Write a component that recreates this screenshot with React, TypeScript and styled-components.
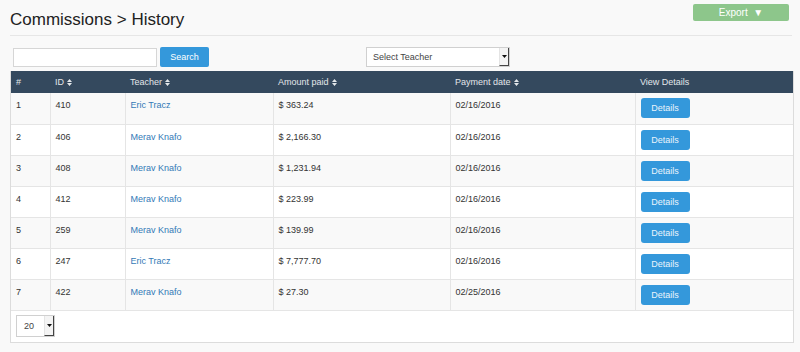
import React from 'react';
import styled, { createGlobalStyle } from 'styled-components';

const rows = [
    { n: 1, id: 410, teacher: 'Eric Tracz', amount: '$ 363.24', date: '02/16/2016' },
    { n: 2, id: 406, teacher: 'Merav Knafo', amount: '$ 2,166.30', date: '02/16/2016' },
    { n: 3, id: 408, teacher: 'Merav Knafo', amount: '$ 1,231.94', date: '02/16/2016' },
    { n: 4, id: 412, teacher: 'Merav Knafo', amount: '$ 223.99', date: '02/16/2016' },
    { n: 5, id: 259, teacher: 'Merav Knafo', amount: '$ 139.99', date: '02/16/2016' },
    { n: 6, id: 247, teacher: 'Eric Tracz', amount: '$ 7,777.70', date: '02/16/2016' },
    { n: 7, id: 422, teacher: 'Merav Knafo', amount: '$ 27.30', date: '02/25/2016' },
];

const columns = [
    { label: '#', width: 39, sort: false },
    { label: 'ID', width: 75, sort: true },
    { label: 'Teacher', width: 148, sort: true },
    { label: 'Amount paid', width: 177, sort: true },
    { label: 'Payment date', width: 185, sort: true },
    { label: 'View Details', width: 158, sort: false },
];

function SortIcon() {
    return (
        <SortSvg width="5" height="7" viewBox="0 0 5 7">
            <path d="M0 3L2.5 0L5 3Z M0 4L2.5 7L5 4Z" fill="currentColor" />
        </SortSvg>
    );
}

function FakeSelect({ value, width, small }: { value: string; width: number; small?: boolean }) {
    return (
        <SelectBox $width={width} $small={small}>
            <SelectText $small={small}>{value}</SelectText>
            <SelectArrow>
                <svg width="5" height="3" viewBox="0 0 5 3">
                    <path d="M0 0H5L2.5 3Z" fill="#111" />
                </svg>
            </SelectArrow>
        </SelectBox>
    );
}

function App() {
    return (
        <>
            <GlobalStyle />
            <Page>
                <Header>
                    <Title>Commissions &gt; History</Title>
                    <ExportButton>Export&nbsp;&nbsp;▼</ExportButton>
                </Header>
                <Toolbar>
                    <SearchInput type="text" />
                    <SearchButton>Search</SearchButton>
                    <TeacherFilter>
                        <FakeSelect value="Select Teacher" width={144} />
                    </TeacherFilter>
                </Toolbar>
                <TableBox>
                    <Table>
                        <colgroup>
                            {columns.map(c => (<col key={c.label} style={{ width: c.width }} />))}
                        </colgroup>
                        <thead>
                            <tr>
                                {columns.map(c => (
                                    <Th key={c.label}>
                                        {c.label}{c.sort && <SortIcon />}
                                    </Th>
                                ))}
                            </tr>
                        </thead>
                        <tbody>
                            {rows.map(r => (
                                <Row key={r.n} $odd={r.n % 2 === 1}>
                                    <Td>{r.n}</Td>
                                    <Td>{r.id}</Td>
                                    <Td><TeacherLink href="#">{r.teacher}</TeacherLink></Td>
                                    <Td>{r.amount}</Td>
                                    <Td>{r.date}</Td>
                                    <Td><DetailsButton>Details</DetailsButton></Td>
                                </Row>
                            ))}
                        </tbody>
                    </Table>
                    <Footer>
                        <FakeSelect value="20" width={39} small />
                    </Footer>
                </TableBox>
            </Page>
        </>
    );
}

export default App;

const GlobalStyle = createGlobalStyle`
    body {
        margin: 0;
        background-color: #f9f9f9;
        font-family: "Liberation Sans", Arial, sans-serif;
        color: #333;
    }
`
const Page = styled.div`
    width: 800px;
    height: 352px;
    padding: 0 8px 0 10px;
    box-sizing: border-box;
`
const Header = styled.div`
    display: flex;
    justify-content: space-between;
    align-items: flex-start;
    padding-top: 4px;
    padding-right: 3px;
    height: 31px;
    border-bottom: 1px solid #e6e6e6;
`
const Title = styled.h1`
    margin: 5px 0 0 0;
    font-size: 17px;
    line-height: 22px;
    font-weight: normal;
    color: #222;
`
const ExportButton = styled.button`
    width: 96px;
    height: 17px;
    padding: 0;
    border: none;
    border-radius: 2px;
    background-color: #8dc68b;
    color: #fff;
    font-family: inherit;
    font-size: 10px;
`
const Toolbar = styled.div`
    display: flex;
    align-items: center;
    gap: 3px;
    margin-top: 11px;
    padding-left: 3px;
    height: 20px;
`
const SearchInput = styled.input`
    width: 144px;
    height: 19px;
    box-sizing: border-box;
    border: 1px solid #d6d6d6;
    background: #fff;
    padding: 0 4px;
    margin: 0;
`
const SearchButton = styled.button`
    width: 49px;
    height: 20px;
    padding: 0;
    border: none;
    border-radius: 2px;
    background-color: #3498db;
    color: #fff;
    font-family: inherit;
    font-size: 9px;
`
const TeacherFilter = styled.div`
    margin-left: 154px;
`
const SelectBox = styled.div<{ $width: number; $small?: boolean }>`
    display: flex;
    width: ${p => p.$width}px;
    height: ${p => (p.$small ? 22 : 20)}px;
    box-sizing: border-box;
    border: 1px solid #d0d0d0;
    background: #fff;
`
const SelectText = styled.div<{ $small?: boolean }>`
    flex: 1;
    padding-left: ${p => (p.$small ? 7 : 6)}px;
    font-size: 9px;
    line-height: ${p => (p.$small ? 20 : 18)}px;
    color: #444;
`
const SelectArrow = styled.div`
    width: 8px;
    display: flex;
    align-items: center;
    justify-content: center;
    border-left: 1px solid #e4e4e4;
    border-right: 1px solid #444;
    border-bottom: 1px solid #444;
    background: #f4f4f4;
`
const TableBox = styled.div`
    margin-top: 4px;
    width: 782px;
    border: 1px solid #dcdcdc;
    border-top: none;
    background: #fff;
`
const Table = styled.table`
    width: 100%;
    border-collapse: collapse;
    table-layout: fixed;
    font-size: 9px;
`
const Th = styled.th`
    background-color: #34495e;
    color: #e3e7ea;
    font-weight: normal;
    text-align: left;
    height: 22px;
    padding: 0 5px;
    white-space: nowrap;
`
const SortSvg = styled.svg`
    margin-left: 3px;
    vertical-align: -1px;
`
const Row = styled.tr<{ $odd: boolean }>`
    background-color: ${p => (p.$odd ? '#f9f9f9' : '#fff')};
`
const Td = styled.td`
    height: 31px;
    padding: 7px 5px 0 5px;
    box-sizing: border-box;
    vertical-align: top;
    border: 1px solid #e5e5e5;
    border-top: none;
    line-height: 11px;
    color: #333;
    &:first-child { border-left: none; }
    &:last-child {
        border-right: none;
        padding-top: 5px;
    }
`
const TeacherLink = styled.a`
    color: #337ab7;
    text-decoration: none;
`
const DetailsButton = styled.button`
    width: 49px;
    height: 20px;
    padding: 0;
    border: none;
    border-radius: 3px;
    background-color: #3498db;
    color: #eaf4fb;
    font-family: inherit;
    font-size: 9px;
`
const Footer = styled.div`
    padding: 4px 5px 5px 5px;
`
